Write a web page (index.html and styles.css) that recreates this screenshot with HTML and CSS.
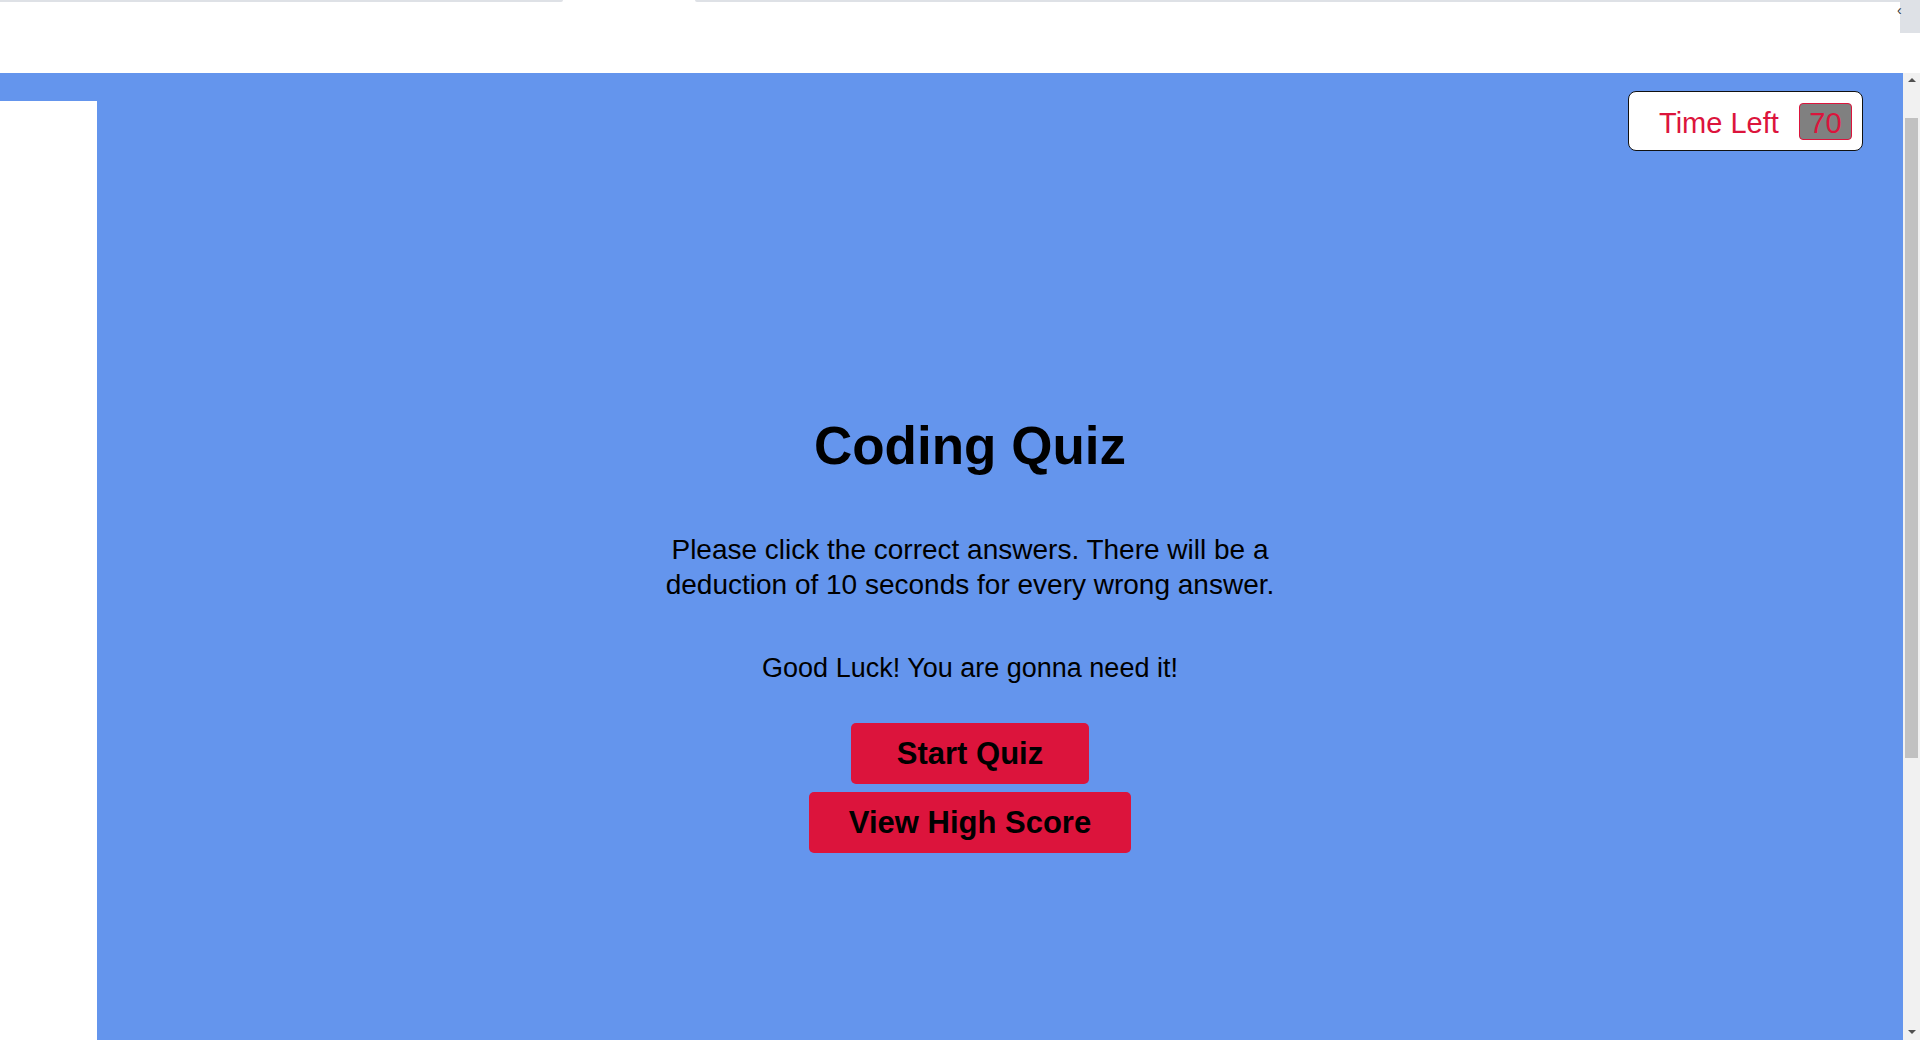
FILE: index.html
```html
<!DOCTYPE html>
<html lang="en">
<head>
<meta charset="utf-8">
<title>Coding Quiz</title>
<link rel="stylesheet" href="styles.css">
</head>
<body>
<div class="topbar">
  <div class="topmain">
    <div class="tabline">
      <span class="seg seg-left"></span>
      <span class="tabgap"></span>
      <span class="seg seg-right"></span>
    </div>
  </div>
  <div class="corner">
    <div class="corner-box"><span class="corner-mark">&#8249;</span></div>
  </div>
</div>
<div class="window">
  <div class="stage">
    <div class="gutter"></div>
    <main class="content">
      <header class="header">
        <div class="timer">
          <span class="timer-label">Time Left</span>
          <span class="timer-value">70</span>
        </div>
      </header>
      <section class="intro">
        <h1 class="title">Coding Quiz</h1>
        <p class="lead">Please click the correct answers. There will be a deduction of 10 seconds for every wrong answer.</p>
        <p class="luck">Good Luck! You are gonna need it!</p>
        <button class="btn">Start Quiz</button>
        <button class="btn">View High Score</button>
      </section>
    </main>
  </div>
  <div class="scrollbar">
    <span class="arrow arrow-up"></span>
    <span class="thumb"></span>
    <span class="track-rest"></span>
    <span class="arrow arrow-down"></span>
  </div>
</div>
</body>
</html>
```
FILE: styles.css
```css
html, body {
  margin: 0;
  padding: 0;
}
body {
  width: 1920px;
  height: 1040px;
  overflow: hidden;
  background: #ffffff;
  font-family: "Comic Sans MS", "Liberation Sans", Arial, sans-serif;
  color: #000;
}

/* top strip */
.topbar {
  display: flex;
  height: 73px;
  background: #ffffff;
}
.topmain {
  flex: 1;
}
.tabline {
  display: flex;
  height: 2px;
}
.seg {
  background: #dee1e6;
}
.seg-left {
  width: 563px;
  border-bottom-right-radius: 2px;
}
.tabgap {
  width: 132px;
}
.seg-right {
  flex: 1;
  border-bottom-left-radius: 2px;
}
.corner {
  width: 20px;
}
.corner-box {
  height: 33px;
  background: #dee1e6;
  position: relative;
}
.corner-mark {
  position: absolute;
  left: -3px;
  top: 3px;
  font-size: 14px;
  line-height: 14px;
  color: #333;
}

/* main window */
.window {
  display: flex;
  height: 967px;
}
.stage {
  flex: 1;
  display: flex;
  background: #6495ed;
}
.gutter {
  width: 97px;
  margin-top: 28px;
  background: #ffffff;
}
.content {
  flex: 1;
  display: flex;
  flex-direction: column;
  padding: 18px 40px 0 0;
}
.header {
  display: flex;
  justify-content: flex-end;
}
.timer {
  box-sizing: border-box;
  width: 235px;
  height: 60px;
  display: flex;
  align-items: center;
  gap: 20px;
  padding: 0 10px 0 30px;
  background: #ffffff;
  border: 1px solid #111;
  border-radius: 8px;
  color: #dc143c;
  font-size: 29px;
}
.timer-label {
  flex: 1;
  white-space: nowrap;
  padding-top: 4px;
}
.timer-value {
  box-sizing: border-box;
  width: 53px;
  height: 37px;
  display: flex;
  align-items: center;
  justify-content: center;
  padding-top: 4px;
  background: #808080;
  border: 1px solid #dc143c;
  border-radius: 4px;
}

.intro {
  display: flex;
  flex-direction: column;
  align-items: center;
  padding-right: 20px;
  text-align: center;
}
.title {
  margin: 265px 0 0;
  font-size: 53px;
  line-height: 60px;
  font-weight: bold;
}
.lead {
  margin: 56px 0 0;
  max-width: 640px;
  font-size: 28px;
  line-height: 35px;
}
.luck {
  margin: 49px 0 0;
  font-size: 27px;
  line-height: 35px;
}
.btn {
  margin: 37px 0 0;
  padding: 12px 46px;
  border: none;
  border-radius: 5px;
  background: #dc143c;
  color: #000;
  font-family: inherit;
  font-size: 31px;
  line-height: 37px;
  font-weight: bold;
}
.btn + .btn {
  margin-top: 8px;
  padding: 12px 40px;
}

/* fake scrollbar */
.scrollbar {
  width: 17px;
  display: flex;
  flex-direction: column;
  align-items: center;
  background: #f1f1f1;
}
.arrow {
  width: 0;
  height: 0;
  border-left: 4px solid transparent;
  border-right: 4px solid transparent;
}
.arrow-up {
  margin-top: 5px;
  border-bottom: 4px solid #505050;
}
.arrow-down {
  margin-bottom: 6px;
  border-top: 4px solid #505050;
}
.thumb {
  width: 13px;
  height: 640px;
  margin-top: 36px;
  background: #c1c1c1;
}
.track-rest {
  flex: 1;
}
```
